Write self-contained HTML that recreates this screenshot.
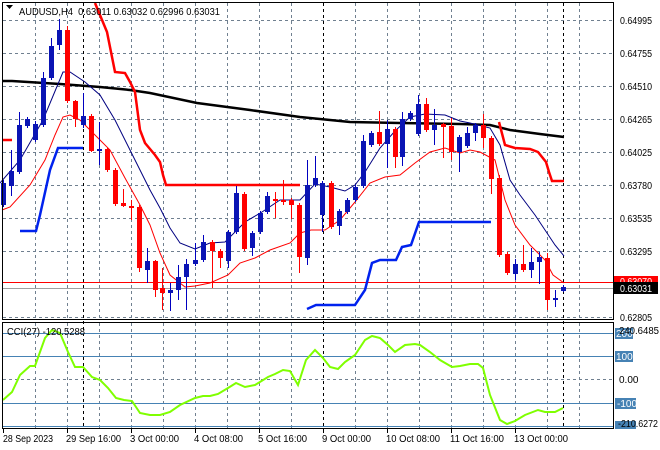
<!DOCTYPE html>
<html><head><meta charset="utf-8"><style>
html,body{margin:0;padding:0;background:#fff;}
svg{display:block;font-family:"Liberation Sans","DejaVu Sans",sans-serif;}
</style></head><body>
<svg width="660" height="450" viewBox="0 0 660 450" xmlns="http://www.w3.org/2000/svg">
<rect width="660" height="450" fill="#fff"/>
<g stroke="#708090" stroke-width="1" stroke-dasharray="3,3" shape-rendering="crispEdges">
<path d="M3 20.5H613M3 53.5H613M3 86.5H613M3 119.5H613M3 152.5H613M3 185.5H613M3 218.5H613M3 251.5H613M3 317.5H613"/>
<path d="M35.5 3V319M67.5 3V319M99.5 3V319M131.5 3V319M163.5 3V319M195.5 3V319M227.5 3V319M259.5 3V319M291.5 3V319M355.5 3V319M387.5 3V319M419.5 3V319M451.5 3V319M483.5 3V319M515.5 3V319M547.5 3V319M579.5 3V319"/>
<path d="M35.5 323V428M67.5 323V428M99.5 323V428M131.5 323V428M163.5 323V428M195.5 323V428M227.5 323V428M259.5 323V428M291.5 323V428M355.5 323V428M387.5 323V428M419.5 323V428M451.5 323V428M483.5 323V428M515.5 323V428M547.5 323V428M579.5 323V428"/>
<path d="M3 379.5H613"/>
</g>
<g stroke="#000" stroke-dasharray="3,3" shape-rendering="crispEdges">
<path d="M83.5 3V428M323.5 3V428M563.5 3V428"/>
</g>
<g stroke="#4682b4" shape-rendering="crispEdges">
<path d="M3 333.5H613M3 356.5H613M3 403.5H613M3 426.5H613"/>
</g>
<path d="M3 282.5H613" stroke="#ff0000" shape-rendering="crispEdges"/>
<path d="M3 288.5H613" stroke="#a0a0a0" shape-rendering="crispEdges"/>
<polyline fill="none" stroke="#000" stroke-width="2.5" points="2,81 12,81 60,84 100,87 130,90 150,93 197,103 250,110 300,117 350,122 400,123 460,124 490,125 510,130 540,134 564,137"/>
<polyline fill="none" stroke="#ff0000" stroke-width="2.5" points="95,3 107,32 115,72 125,73 130,82 135,92 140,130 145,143 155,155 160,162 163,175 166,185 300,185"/>
<path d="M3 140H12" stroke="#ff0000" stroke-width="2.5"/>
<polyline fill="none" stroke="#ff0000" stroke-width="2.5" points="499,122 505,145 515,148 530,149 538,152 546,162 549,172 552,181 564,181"/>
<polyline fill="none" stroke="#0022ee" stroke-width="2.5" points="20,231 36,231 40,215 50,170 58,148 83,148"/>
<polyline fill="none" stroke="#0022ee" stroke-width="2.5" points="307,309 316,305 355,305 365,290 372,263 380,260 396,260 402,247 411,245 419,222 491,222"/>
<polyline fill="none" stroke="#000080" stroke-width="1" points="0,183 20,160 43,120 63,72 70,72 85,82 100,95 115,120 135,160 150,190 160,208 170,228 180,243 195,249 210,243 225,242 245,222 262,212 280,200 300,200 315,184 330,187 345,191 355,185 365,172 380,148 395,131 410,117 425,114 445,115 460,121 470,123 490,128 500,145 510,180 520,195 535,215 545,230 555,245 564,256"/>
<polyline fill="none" stroke="#ff0000" stroke-width="1" points="2,210 10,207 30,185 45,160 55,135 63,117 70,115 80,120 95,135 110,150 125,178 140,205 150,225 160,253 170,275 185,287 195,286 210,283 228,275 240,263 255,258 270,250 290,243 300,233 311,230 325,230 340,220 355,202 370,183 385,177 400,175 415,163 430,152 445,148 460,153 470,150 480,152 495,160 505,200 515,225 530,245 545,260 553,275 564,283"/>
<g shape-rendering="crispEdges">
<path stroke="#0000c0" d="M3.5 180V207M11.5 150V196M19.5 112V174M27.5 117V128M35.5 121V142M43.5 72V127M51.5 38V80M59.5 19V50M83.5 93V128M99.5 122V165M147.5 248V283M170.5 283V311M178.5 265V300M186.5 259V310M195.5 243V266M203.5 235V262M228.5 230V268M236.5 186V234M252.5 231V256M260.5 211V234M267.5 192V214M307.5 160V265M315.5 156V187M322.5 181V232M339.5 209V235M347.5 198V214M355.5 185V202M363.5 135V188M371.5 131V147M387.5 120V168M402.5 112V166M410.5 111V121M418.5 95V136M434.5 109V145M459.5 135V172M467.5 127V148M475.5 123V141M515.5 259V280M531.5 248V278M539.5 252V284M555.5 290V307M563.5 285V292"/>
<path stroke="#ff0000" d="M67.5 26V103M75.5 100V127M91.5 114V152M107.5 148V172M115.5 168V206M123.5 189V207M131.5 200V220M139.5 205V272M155.5 260V297M162.5 268V310M212.5 240V288M220.5 249V268M244.5 192V251M275.5 192V218M283.5 180V205M291.5 198V219M299.5 203V273M331.5 181V229M379.5 111V146M395.5 127V168M426.5 98V132M443.5 123V158M451.5 118V160M483.5 114V148M491.5 136V194M499.5 175V257M507.5 252V275M523.5 245V272M547.5 253V310"/>
<g fill="#0a14b4">
<rect x="1" y="183" width="5" height="22"/><rect x="9" y="171" width="5" height="15"/><rect x="17" y="125" width="5" height="47"/><rect x="25" y="119" width="5" height="7"/><rect x="33" y="124" width="5" height="16"/><rect x="41" y="78" width="5" height="47"/><rect x="49" y="46" width="5" height="32"/><rect x="57" y="30" width="5" height="15"/><rect x="81" y="116" width="5" height="9"/><rect x="97" y="149" width="5" height="2"/><rect x="145" y="261" width="5" height="9"/><rect x="168" y="290" width="5" height="3"/><rect x="176" y="277" width="5" height="13"/><rect x="184" y="264" width="5" height="13"/><rect x="193" y="260" width="5" height="4"/><rect x="201" y="242" width="5" height="18"/><rect x="226" y="232" width="5" height="29"/><rect x="234" y="193" width="5" height="39"/><rect x="250" y="233" width="5" height="15"/><rect x="258" y="213" width="5" height="19"/><rect x="265" y="196" width="5" height="16"/><rect x="305" y="185" width="5" height="73"/><rect x="313" y="178" width="5" height="7"/><rect x="320" y="183" width="5" height="32"/><rect x="337" y="211" width="5" height="15"/><rect x="345" y="200" width="5" height="12"/><rect x="353" y="187" width="5" height="13"/><rect x="361" y="141" width="5" height="45"/><rect x="369" y="133" width="5" height="12"/><rect x="385" y="129" width="5" height="15"/><rect x="400" y="119" width="5" height="38"/><rect x="408" y="113" width="5" height="6"/><rect x="416" y="104" width="5" height="30"/><rect x="432" y="125" width="5" height="5"/><rect x="457" y="137" width="5" height="15"/><rect x="465" y="133" width="5" height="13"/><rect x="473" y="125" width="5" height="8"/><rect x="513" y="264" width="5" height="10"/><rect x="529" y="262" width="5" height="8"/><rect x="537" y="257" width="5" height="5"/><rect x="553" y="298" width="5" height="2"/><rect x="561" y="287" width="5" height="4"/>
</g>
<g fill="#ff0000">
<rect x="65" y="30" width="5" height="71"/><rect x="73" y="101" width="5" height="18"/><rect x="89" y="116" width="5" height="35"/><rect x="105" y="149" width="5" height="21"/><rect x="113" y="170" width="5" height="34"/><rect x="121" y="203" width="5" height="3"/><rect x="129" y="206" width="5" height="2"/><rect x="137" y="207" width="5" height="61"/><rect x="153" y="261" width="5" height="29"/><rect x="160" y="288" width="5" height="5"/><rect x="210" y="242" width="5" height="9"/><rect x="218" y="251" width="5" height="7"/><rect x="242" y="194" width="5" height="55"/><rect x="273" y="199" width="5" height="2"/><rect x="281" y="200" width="5" height="2"/><rect x="289" y="200" width="5" height="5"/><rect x="297" y="205" width="5" height="52"/><rect x="329" y="183" width="5" height="44"/><rect x="377" y="132" width="5" height="12"/><rect x="393" y="129" width="5" height="28"/><rect x="424" y="104" width="5" height="26"/><rect x="441" y="124" width="5" height="3"/><rect x="449" y="126" width="5" height="26"/><rect x="481" y="125" width="5" height="13"/><rect x="489" y="138" width="5" height="41"/><rect x="497" y="178" width="5" height="77"/><rect x="505" y="254" width="5" height="19"/><rect x="521" y="264" width="5" height="6"/><rect x="545" y="258" width="5" height="42"/>
</g>
</g>
<polyline fill="none" stroke="#7fff00" stroke-width="2" points="3,400 12,392 20,375 30,366 35,366 45,338 52,330 60,333 68,352 75,367 83,367 92,377 100,380 108,388 116,398 124,400 132,401 140,413 150,415 160,415 170,412 180,405 195,398 203,396 210,396 218,394 228,388 236,383 245,387 255,385 268,377 275,374 283,370 290,371 298,385 306,360 315,350 323,358 330,367 338,369 345,362 355,355 365,340 372,336 380,338 388,345 395,352 405,345 415,344 420,345 430,352 440,360 452,367 460,366 470,364 478,364 483,368 490,395 500,420 507,424 515,421 525,415 538,410 545,412 555,412 563,408"/>
<g fill="none" stroke="#000" shape-rendering="crispEdges">
<rect x="2.5" y="2.5" width="611" height="317"/>
<rect x="2.5" y="322.5" width="611" height="106"/>
</g>
<g stroke="#000" shape-rendering="crispEdges"><path d="M3.5 429V433M67.5 429V433M131.5 429V433M195.5 429V433M259.5 429V433M323.5 429V433M387.5 429V433M451.5 429V433M515.5 429V433"/></g>
<path d="M6 5H13L9.5 9Z" fill="#000"/>
<text x="19" y="15" font-size="10.5" fill="#000" textLength="201" lengthAdjust="spacingAndGlyphs">AUDUSD,H4&#160; 0.63011 0.63032 0.62996 0.63031</text>
<text x="7" y="335" font-size="10.5" fill="#000" textLength="78" lengthAdjust="spacingAndGlyphs">CCI(27) -120.5288</text>
<g font-size="10" fill="#000">
<text x="620" y="24" textLength="32" lengthAdjust="spacingAndGlyphs">0.64995</text><text x="620" y="57" textLength="32" lengthAdjust="spacingAndGlyphs">0.64755</text><text x="620" y="90" textLength="32" lengthAdjust="spacingAndGlyphs">0.64510</text><text x="620" y="123" textLength="32" lengthAdjust="spacingAndGlyphs">0.64265</text><text x="620" y="156" textLength="32" lengthAdjust="spacingAndGlyphs">0.64025</text><text x="620" y="189" textLength="32" lengthAdjust="spacingAndGlyphs">0.63780</text><text x="620" y="222" textLength="32" lengthAdjust="spacingAndGlyphs">0.63535</text><text x="620" y="255" textLength="32" lengthAdjust="spacingAndGlyphs">0.63295</text><text x="620" y="321" textLength="32" lengthAdjust="spacingAndGlyphs">0.62805</text>
</g>
<rect x="614" y="276" width="44" height="10" fill="#ff0000"/>
<text x="620" y="285" font-size="10" fill="#fff" textLength="32" lengthAdjust="spacingAndGlyphs">0.63070</text>
<rect x="614" y="282" width="44" height="12" fill="#000"/>
<text x="620" y="292" font-size="10" fill="#fff" textLength="32" lengthAdjust="spacingAndGlyphs">0.63031</text>
<rect x="615" y="328" width="18" height="11" fill="#4682b4"/><text x="616" y="337" font-size="10" fill="#fff">200</text>
<text x="619" y="334" font-size="10" fill="#000" textLength="40" lengthAdjust="spacingAndGlyphs">240.6485</text>
<rect x="615" y="351" width="18" height="11" fill="#4682b4"/><text x="616" y="360" font-size="10" fill="#fff">100</text>
<text x="619" y="383" font-size="10" fill="#000">0.00</text>
<rect x="615" y="398" width="21" height="11" fill="#4682b4"/><text x="617" y="407" font-size="10" fill="#fff">-100</text>
<rect x="615" y="421" width="21" height="8" fill="#4682b4"/>
<text x="618" y="427" font-size="10" fill="#000" textLength="40" lengthAdjust="spacingAndGlyphs">-210.6272</text>
<g font-size="10" fill="#000">
<text x="3" y="442" textLength="50" lengthAdjust="spacingAndGlyphs">28 Sep 2023</text><text x="66" y="442" textLength="55" lengthAdjust="spacingAndGlyphs">29 Sep 16:00</text><text x="130" y="442" textLength="49" lengthAdjust="spacingAndGlyphs">3 Oct 00:00</text><text x="194" y="442" textLength="49" lengthAdjust="spacingAndGlyphs">4 Oct 08:00</text><text x="258" y="442" textLength="49" lengthAdjust="spacingAndGlyphs">5 Oct 16:00</text><text x="322" y="442" textLength="49" lengthAdjust="spacingAndGlyphs">9 Oct 00:00</text><text x="386" y="442" textLength="54" lengthAdjust="spacingAndGlyphs">10 Oct 08:00</text><text x="450" y="442" textLength="54" lengthAdjust="spacingAndGlyphs">11 Oct 16:00</text><text x="514" y="442" textLength="54" lengthAdjust="spacingAndGlyphs">13 Oct 00:00</text>
</g>
</svg>
</body></html>
